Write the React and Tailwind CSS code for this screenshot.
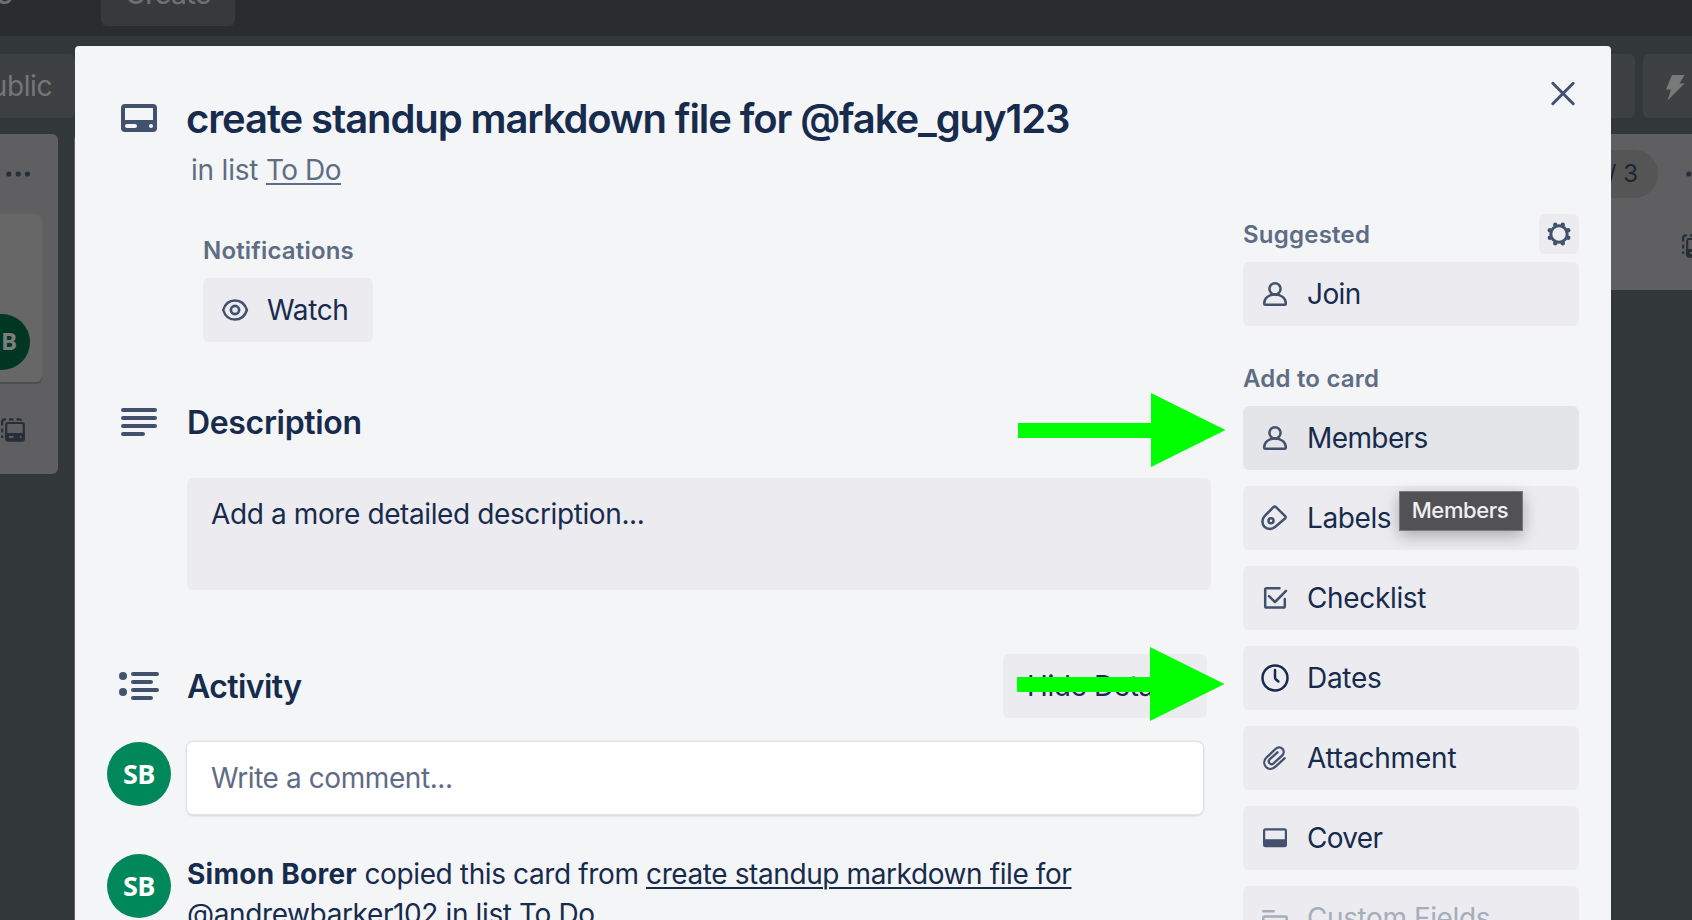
const stroke = {
  fill: "none",
  stroke: "currentColor",
  strokeWidth: 2.5,
  strokeLinecap: "round",
  strokeLinejoin: "round",
};

function Icon({ children, className = "text-[#42526e]" }) {
  return (
    <svg viewBox="0 0 40 40" className={`size-10 shrink-0 ${className}`} {...stroke}>
      {children}
    </svg>
  );
}

const icons = {
  eye: (
    <>
      <path d="M8.2 20C10 14 14.5 10.4 20 10.4S30 14 31.9 20C30 26 25.500 29.600 20 29.600S10 26 8.200 20Z" />
      <circle cx="20" cy="20" r="4.100" strokeWidth="2.700" />
    </>
  ),
  person: (
    <>
      <circle cx="20" cy="14.800" r="5.600" />
      <path d="M9.200 29.300C9.200 24 14 20.400 20 20.400S30.800 24 30.800 29.300V29.800Q30.800 30.800 29.800 30.800H10.200Q9.200 30.800 9.200 29.800Z" />
    </>
  ),
  label: (
    <>
      <path d="M18.400 9.200L10 17.700C6.600 21.200 6.700 26 9.500 28.800C12.500 31.700 17 31.500 20 29L30 20.500Q31.200 19.400 30.200 18.200L21 9.200Q19.700 8 18.400 9.200Z" />
      <circle cx="16" cy="22.700" r="2.500" />
    </>
  ),
  check: (
    <>
      <path d="M24.500 10.200H11.500Q10.200 10.200 10.200 11.500V28.200Q10.200 29.500 11.500 29.500H28.500Q29.800 29.500 29.800 28.200V21" />
      <path d="M14 18.200L20 24L31 12.800" />
    </>
  ),
  clock: (
    <>
      <circle cx="20" cy="20" r="12.500" />
      <path d="M20 12V19Q20 20.600 21 21.500L23.400 23.500" />
    </>
  ),
  clip: (
    <path
      strokeWidth="2.300"
      d="M29.700 20.200L20.500 28.700C17.500 31.500 13.500 31.600 11 29C8.500 26.300 8.600 22.300 11.500 19.500L20.500 11C22.600 9 25.500 8.800 27.400 10.700C29.300 12.700 29.100 15.600 27 17.600L18.600 25.300C17.300 26.400 15.600 26.400 14.500 25.200C13.400 24 13.600 22.400 14.800 21.200L22.500 14.300"
    />
  ),
  cover: (
    <path
      fill="currentColor"
      stroke="none"
      fillRule="evenodd"
      d="M10.500 10.300H29.500Q32 10.300 32 12.800V26.800Q32 29.300 29.500 29.300H10.500Q8 29.300 8 26.800V12.800Q8 10.300 10.500 10.300ZM10.200 12.500V21.200H29.800V12.500Z"
    />
  ),
  fields: (
    <>
      <path d="M8.300 13.300H18.700" />
      <rect x="8.300" y="18.600" width="23.400" height="12" rx="1.500" />
    </>
  ),
};

const addToCard = [
  { icon: "person", label: "Members", tracking: "tracking-[-0.6px]", bg: "bg-[#e4e5e9]" },
  { icon: "label", label: "Labels", tracking: "tracking-[-0.4px]" },
  { icon: "check", label: "Checklist", tracking: "tracking-[-0.35px]" },
  { icon: "clock", label: "Dates", tracking: "tracking-[-0.3px]", iconColor: "text-[#172b4d]" },
  { icon: "clip", label: "Attachment", tracking: "tracking-[-0.2px]" },
  { icon: "cover", label: "Cover", tracking: "tracking-[-0.7px]" },
  { icon: "fields", label: "Custom Fields", tracking: "tracking-[-0.4px]", iconColor: "text-[#a5adba]", color: "text-[#a5adba]" },
];

function CardButton({ icon, label, tracking, bg = "bg-[#ecebf0]", color = "text-[#172b4d]", iconColor }) {
  return (
    <button className={`flex h-16 shrink-0 items-center gap-3 rounded-md pl-3 text-left ${bg} ${color}`}>
      <Icon className={iconColor}>{icons[icon]}</Icon>
      <span className={tracking}>{label}</span>
    </button>
  );
}

function Avatar() {
  return (
    <div className="flex size-16 shrink-0 items-center justify-center rounded-full bg-[#00875a] pb-0.5 font-['Open_Sans',sans-serif] text-[27px] leading-none font-bold tracking-[-0.5px] text-white">
      SB
    </div>
  );
}

function HeadIcon({ children }) {
  return (
    <svg viewBox="0 0 24 24" className="size-12 shrink-0" fill="#42526e">
      {children}
    </svg>
  );
}

function TemplateIcon() {
  return (
    <svg viewBox="0 0 24 24" className="size-6 shrink-0" fill="none" stroke="#272e38" strokeWidth="2.200">
      <rect x="5.200" y="5" width="17.600" height="17.500" rx="2" />
      <path d="M5 16H23V20Q23 22.500 21 22.500H7Q5 22.500 5 20Z" fill="#272e38" />
      <path d="M8 19H12.500M19 19H20.500" stroke="#5f5f61" strokeWidth="2" />
      <path d="M1.100 20V17.500M1.100 14.500V10.500M1.100 7.500V4Q1.100 1.300 4 1.300H5M8 1.300H12.500M15.500 1.300H18Q20 1.300 20.500 2.500" />
    </svg>
  );
}

function Dots() {
  return (
    <svg viewBox="0 0 24 6" className="h-1.5 w-6 shrink-0" fill="#272e38">
      <circle cx="2.800" cy="3" r="2.600" />
      <circle cx="12.200" cy="3" r="2.600" />
      <circle cx="21.500" cy="3" r="2.600" />
    </svg>
  );
}

function Board() {
  return (
    <div className="flex h-full flex-col">
      <div className="flex h-9 shrink-0 items-start bg-[#292d2e] text-[28px] leading-[40px] font-medium text-[#6c6f70]">
        <div className="-mt-[26px] flex w-[101px] shrink-0 items-center">
          <span className="-ml-[3px] font-semibold">s</span>
          <svg viewBox="0 0 16 10" className="ml-[20px] w-4" fill="none" stroke="currentColor" strokeWidth="3">
            <path d="M2 2L8 8L14 2" />
          </svg>
        </div>
        <div className="-mt-[38px] flex h-16 w-[134px] items-center justify-center rounded-md bg-[#363a3b]">
          <span className="tracking-[-0.6px]">Create</span>
        </div>
      </div>
      <div className="flex h-[98px] shrink-0 items-center justify-between pt-[18px] pb-4">
        <div className="flex h-16 w-[75px] items-center justify-end overflow-hidden rounded-r-md bg-[#3d4141] pr-[23px] text-[28px] tracking-[-0.4px] text-[#757777]">
          Public
        </div>
        <div className="flex gap-2">
          <div className="h-16 w-20 rounded-md bg-[#3d4141]" />
          <div className="flex h-16 w-[49px] items-center rounded-l-md bg-[#3d4141] pl-[23px]">
            <svg viewBox="0 0 19 26" className="mt-1 h-[26px] w-[19px]" fill="#787a7a">
              <path d="M6 0H18.500L13.500 8.500H18.500L1.500 25.500L5 14.500H0Z" />
            </svg>
          </div>
        </div>
      </div>
      <div className="flex grow items-start justify-between">
        <div className="flex h-[340px] w-[58px] shrink-0 flex-col rounded-r-md bg-[#5f5f61]">
          <div className="flex h-20 items-center pl-1.5">
            <Dots />
          </div>
          <div className="flex h-[168px] w-[42px] items-end rounded-r-md bg-[#676767] pb-3 shadow-[0_2px_0_#4c4e54]">
            <div className="-ml-[26px] flex size-14 shrink-0 items-center justify-end rounded-full bg-[#003622] pr-[13px] pb-0.5 font-['Open_Sans',sans-serif] text-2xl leading-none font-bold text-[#7b807d]">
              B
            </div>
          </div>
          <div className="mt-9 pl-px">
            <TemplateIcon />
          </div>
        </div>
        <div className="ml-4 h-full grow rounded-tl-md bg-[#5f5f61]" />
        <div className="h-full w-[1500px] shrink-0" />
        <div className="flex h-[156px] w-[112px] shrink-0 flex-col bg-[#5f5f61]">
          <div className="flex items-center pt-4">
            <div className="flex h-12 w-[78px] shrink-0 items-center justify-end rounded-r-full bg-[#555556] pr-5 text-2xl text-[#1b2432]">
              / 3
            </div>
            <div className="ml-7">
              <Dots />
            </div>
          </div>
          <div className="mt-9 pl-[102px]">
            <TemplateIcon />
          </div>
        </div>
      </div>
    </div>
  );
}

function Arrow({ className }) {
  return (
    <svg viewBox="0 0 208 74" className={`absolute h-[74px] w-[208px] ${className}`} fill="#00ff00">
      <path d="M0 30H133V0L207.500 37L133 74V45H0Z" />
    </svg>
  );
}

export default function App() {
  return (
    <div className="relative h-[920px] w-[1692px] overflow-hidden bg-[#323838] font-['Inter','Liberation_Sans',sans-serif] text-[28px] leading-[40px] text-[#172b4d]">
      <Board />

      <div className="absolute top-[46px] left-[75px] flex h-[900px] w-[1536px] flex-col rounded-t bg-[#f4f5f7] pt-12 pr-8 pl-10">
        <header className="flex shrink-0 gap-6">
          <HeadIcon>
            <path
              fillRule="evenodd"
              d="M5 5H19Q21 5 21 7V17Q21 19 19 19H5Q3 19 3 17V7Q3 5 5 5ZM5 7V13H19V7ZM6 15A1 1 0 0 0 6 17H10A1 1 0 0 0 10 15ZM18 15A1 1 0 0 0 18 17A1 1 0 0 0 18 15Z"
            />
          </HeadIcon>
          <div className="flex flex-col gap-2 whitespace-nowrap">
            <h2 className="-ml-px h-12 pt-px text-[40px] leading-[48px] font-semibold tracking-[-1.1px]">
              create standup markdown file for @fake_guy123
            </h2>
            <p className="pl-1 tracking-[-0.2px] text-[#5e6c84]">
              in list <a className="tracking-[-0.5px] underline decoration-2 underline-offset-[3px]">To Do</a>
            </p>
          </div>
        </header>

        <div className="flex justify-between">
          <main className="flex w-[1096px] flex-col">
            <section className="mt-10 flex flex-col items-start gap-2 pl-[88px]">
              <h3 className="h-10 pt-px text-2xl leading-[40px] font-semibold tracking-[0.18px] text-[#5e6c84]">
                Notifications
              </h3>
              <button className="flex h-16 w-[170px] items-center gap-3 rounded-md bg-[#ecebf0] pl-3 tracking-[-0.35px]">
                <Icon>{icons.eye}</Icon>
                Watch
              </button>
            </section>

            <section className="mt-14">
              <div className="flex gap-6">
                <HeadIcon>
                  <rect x="3" y="5" width="18" height="2" rx="1" />
                  <rect x="3" y="9" width="18" height="2" rx="1" />
                  <rect x="3" y="13" width="18" height="2" rx="1" />
                  <rect x="3" y="17" width="12" height="2" rx="1" />
                </HeadIcon>
                <h3 className="h-12 pt-px text-[32px] leading-[48px] font-semibold tracking-[-0.33px]">Description</h3>
              </div>
              <div className="mt-8 ml-[72px] h-28 rounded-md bg-[#ecebf0] px-6 py-4 tracking-[-0.39px]">
                Add a more detailed description...
              </div>
            </section>

            <section className="mt-16">
              <div className="flex items-center gap-6 pr-1">
                <HeadIcon>
                  <circle cx="4" cy="7" r="2" />
                  <circle cx="4" cy="15" r="2" />
                  <rect x="8" y="5" width="14" height="2" rx="1" />
                  <rect x="8" y="9" width="11" height="2" rx="1" />
                  <rect x="8" y="13" width="14" height="2" rx="1" />
                  <rect x="8" y="17" width="11" height="2" rx="1" />
                </HeadIcon>
                <h3 className="h-12 grow pt-px text-[32px] leading-[48px] font-semibold tracking-[-0.58px]">Activity</h3>
                <button className="h-16 w-[204px] rounded-md bg-[#ecebf0] pr-0.5 tracking-[-0.4px]">Hide Details</button>
              </div>
              <div className="mt-6 -ml-2 flex gap-4">
                <Avatar />
                <div className="h-[72px] w-[1016px] rounded-md bg-white px-6 py-4 tracking-[-0.42px] text-[#5e6c84] shadow-[0_0_0_1.5px_#e1e3e8,0_2px_2px_#c9cedb]">
                  Write a comment...
                </div>
              </div>
              <div className="mt-10 -ml-2 flex gap-4">
                <Avatar />
                <p className="tracking-[-0.38px] whitespace-nowrap">
                  <b className="font-bold tracking-[0.25px]">Simon Borer</b> copied this card from{" "}
                  <a className="tracking-[-0.4px] underline decoration-2 underline-offset-[3px]">
                    create standup markdown file for
                  </a>
                  <br />
                  @andrewbarker102 in list To Do
                </p>
              </div>
            </section>
          </main>

          <aside className="flex w-[336px] flex-col pt-6">
            <div className="mb-2 flex items-center justify-between">
              <h3 className="h-10 pt-px text-2xl leading-[40px] font-semibold tracking-[0.23px] text-[#5e6c84]">
                Suggested
              </h3>
              <button className="rounded-md bg-[#ecebf0]">
                <Icon>
                  <circle cx="20" cy="20" r="8.200" strokeWidth="3" />
                  <g fill="currentColor" stroke="none">
                    <circle cx="16.200" cy="10.800" r="2.200" />
                    <circle cx="23.800" cy="10.800" r="2.200" />
                    <circle cx="16.200" cy="29.200" r="2.200" />
                    <circle cx="23.800" cy="29.200" r="2.200" />
                    <circle cx="10.800" cy="16.200" r="2.200" />
                    <circle cx="10.800" cy="23.800" r="2.200" />
                    <circle cx="29.200" cy="16.200" r="2.200" />
                    <circle cx="29.200" cy="23.800" r="2.200" />
                  </g>
                </Icon>
              </button>
            </div>
            <CardButton icon="person" label="Join" tracking="tracking-[-0.6px]" />
            <h3 className="mt-8 mb-2 h-10 pt-px text-2xl leading-[40px] font-semibold tracking-[0.2px] text-[#5e6c84]">
              Add to card
            </h3>
            <div className="flex flex-col gap-4">
              {addToCard.map((item) => (
                <CardButton key={item.label} {...item} />
              ))}
            </div>
          </aside>
        </div>

        <button className="absolute top-7 right-7" aria-label="Close">
          <Icon>
            <path d="M9.800 9.300L30.200 29.700M30.200 9.300L9.800 29.700" strokeWidth="3" />
          </Icon>
        </button>
      </div>

      <div className="absolute top-[491px] left-[1399px] flex h-10 w-[124px] items-center justify-center border border-[#7b7b7d] bg-[#525155] pr-0.5 pb-[3px] text-[22px] font-medium tracking-[-0.4px] text-[#efeff0] shadow-[0_5px_16px_rgba(0,0,0,0.28)]">
        Members
      </div>

      <Arrow className="top-[393px] left-[1018px]" />
      <Arrow className="top-[647px] left-[1017px]" />
    </div>
  );
}
